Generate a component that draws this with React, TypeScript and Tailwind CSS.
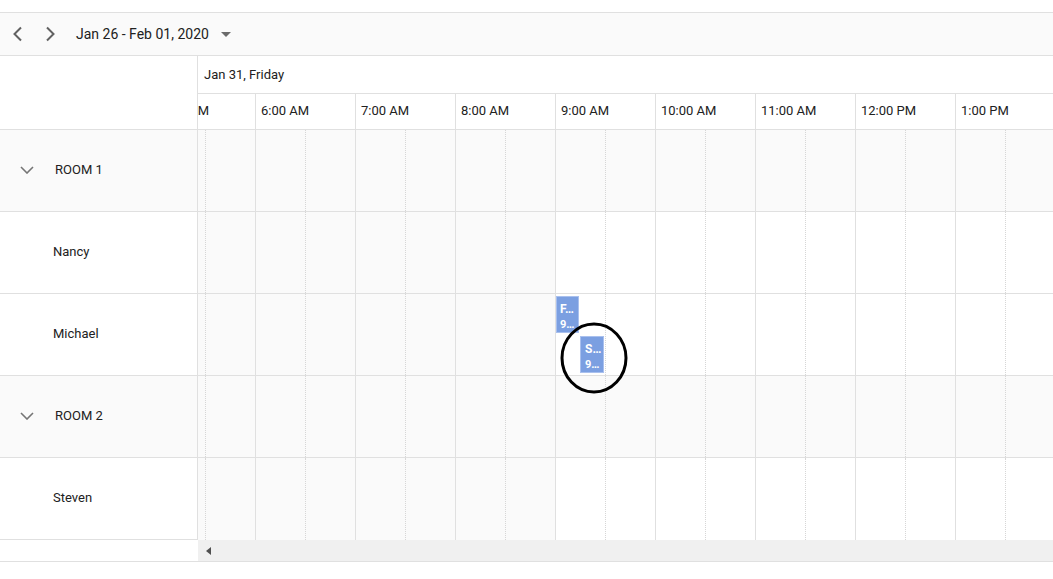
import React from "react";

const hours = ["5:00 AM", "6:00 AM", "7:00 AM", "8:00 AM", "9:00 AM", "10:00 AM", "11:00 AM", "12:00 PM", "1:00 PM", "2:00 PM"];

type Row = { kind: "room" | "res"; label: string; events?: boolean };
const rows: Row[] = [
  { kind: "room", label: "ROOM 1" },
  { kind: "res", label: "Nancy" },
  { kind: "res", label: "Michael", events: true },
  { kind: "room", label: "ROOM 2" },
  { kind: "res", label: "Steven" },
];

function ChevronLeft() {
  return (
    <svg width="16" height="16" viewBox="0 0 16 16" fill="none">
      <path d="M11 1.5 L4.5 8 L11 14.5" stroke="#616161" strokeWidth="2" />
    </svg>
  );
}
function ChevronRight() {
  return (
    <svg width="16" height="16" viewBox="0 0 16 16" fill="none">
      <path d="M5 1.5 L11.5 8 L5 14.5" stroke="#616161" strokeWidth="2" />
    </svg>
  );
}
function ChevronDown() {
  return (
    <svg width="14" height="8" viewBox="0 0 14 8" fill="none">
      <path d="M1 1 L7 7 L13 1" stroke="#757575" strokeWidth="1.6" />
    </svg>
  );
}

function TimelineRow({ row, last }: { row: Row; last: boolean }) {
  return (
    <div className={`flex-1 overflow-hidden relative ${last ? "" : "border-b border-[#e0e0e0]"}`}>
      <div className="flex ml-[-43px] w-max h-full relative">
        {hours.map((h, i) => {
          const grey = row.kind === "room" || i < 4;
          return (
            <div key={h} className={`flex w-[100px] h-full border-l border-[#e0e0e0] ${grey ? "bg-[#fafafa]" : "bg-white"}`}>
              <div className="w-[50px] h-full border-r border-dotted border-[#d6d6d6]" />
              <div className="flex-1 h-full" />
            </div>
          );
        })}
        {row.events && (
          <>
            <div className="absolute left-[401px] top-[2px] w-[23px] h-[37px] bg-[#7b9fe1] border border-[#a9c0ee] text-white overflow-hidden px-[3px] pt-[4px] leading-[16px]">
              <div className="text-[12px] font-bold whitespace-nowrap">F…</div>
              <div className="text-[11px] font-bold whitespace-nowrap">9…</div>
            </div>
            <div className="absolute left-[425px] top-[42px] w-[24px] h-[37px] bg-[#7b9fe1] border border-[#a9c0ee] text-white overflow-hidden px-[4px] pt-[4px] leading-[16px]">
              <div className="text-[12px] font-bold whitespace-nowrap">S…</div>
              <div className="text-[11px] font-bold whitespace-nowrap">9…</div>
            </div>
          </>
        )}
      </div>
    </div>
  );
}

export default function App() {
  return (
    <div
      className="relative w-[1053px] h-[579px] bg-white text-[#212121] overflow-hidden"
      style={{ fontFamily: "Roboto, 'Noto Sans', sans-serif" }}
    >
      <div className="h-[12px]" />
      {/* Toolbar */}
      <div className="h-[44px] border-y border-[#e0e0e0] bg-[#fafafa] flex items-center pl-[2px]">
        <div className="w-[32px] flex justify-center">
          <ChevronLeft />
        </div>
        <div className="w-[32px] flex justify-center">
          <ChevronRight />
        </div>
        <div className="ml-[10px] text-[14px]">Jan 26 - Feb 01, 2020</div>
        <div className="ml-[12px] w-0 h-0 border-l-[5px] border-r-[5px] border-t-[5px] border-l-transparent border-r-transparent border-t-[#6b6b6b]" />
      </div>
      {/* Header */}
      <div className="flex border-b border-[#e0e0e0]">
        <div className="w-[198px] h-[73px] border-r border-[#e0e0e0]" />
        <div className="flex-1 overflow-hidden">
          <div className="h-[38px] border-b border-[#e0e0e0] flex items-center pl-[6px] text-[13px]">Jan 31, Friday</div>
          <div className="flex ml-[-43px] w-max h-[35px]">
            {hours.map((h) => (
              <div key={h} className="w-[100px] h-full border-l border-[#e0e0e0] flex items-center pl-[5px] pb-[2px] text-[13px] whitespace-nowrap">
                {h}
              </div>
            ))}
          </div>
        </div>
      </div>
      {/* Rows */}
      {rows.map((row, idx) => (
        <div key={row.label} className="flex h-[82px]">
          <div
            className={`w-[198px] shrink-0 border-r border-b border-[#e0e0e0] flex items-center pb-[2px] text-[13px] ${
              row.kind === "room" ? "bg-[#fafafa] pl-[20px]" : "bg-white pl-[53px]"
            }`}
          >
            {row.kind === "room" && (
              <span className="mr-[21px] flex">
                <ChevronDown />
              </span>
            )}
            {row.label}
          </div>
          <TimelineRow row={row} last={idx === rows.length - 1} />
        </div>
      ))}
      {/* Scrollbar row */}
      <div className="flex h-[22px] border-b border-[#e0e0e0]">
        <div className="w-[198px] shrink-0 bg-white" />
        <div className="flex-1 bg-[#f0f0f0] flex items-center pl-[8px]">
          <div className="w-0 h-0 border-t-[4px] border-b-[4px] border-r-[5px] border-t-transparent border-b-transparent border-r-[#505050]" />
        </div>
      </div>
      {/* Annotation circle */}
      <svg className="absolute left-[560px] top-[322px]" width="68" height="72" viewBox="0 0 68 72" fill="none">
        <ellipse cx="34" cy="36" rx="32" ry="34" stroke="#000" strokeWidth="3" />
      </svg>
    </div>
  );
}
